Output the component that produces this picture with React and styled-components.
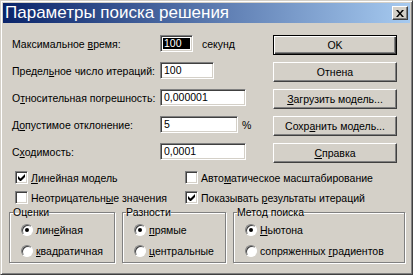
import React from 'react'
import styled, { createGlobalStyle } from 'styled-components'

const App = () => {
  return (
    <>
      <GlobalStyle />
      <Window>
        <TitleBar>
          <Title>Параметры поиска решения</Title>
          <CloseButton>
            <svg width="8" height="7" viewBox="0 0 8 7">
              <path d="M0 0h2l2 2.5L6 0h2L5 3.5 8 7H6L4 4.5 2 7H0l3-3.5z" fill="#000" />
            </svg>
          </CloseButton>
        </TitleBar>

        <Top>
          <Form>
            <Label>Максимальное <U>в</U>ремя:</Label>
            <Cell>
              <TextBox width={33}><Value selected>100</Value></TextBox>
              <Unit gap={9}>секунд</Unit>
            </Cell>

            <Label>Предел<U>ь</U>ное число итераций:</Label>
            <Cell>
              <TextBox width={54}><Value>100</Value></TextBox>
            </Cell>

            <Label>О<U>т</U>носительная погрешность:</Label>
            <Cell>
              <TextBox width={86}><Value>0,000001</Value></TextBox>
            </Cell>

            <Label>Д<U>о</U>пустимое отклонение:</Label>
            <Cell>
              <TextBox width={78}><Value>5</Value></TextBox>
              <Unit gap={4}>%</Unit>
            </Cell>

            <Label>С<U>х</U>одимость:</Label>
            <Cell>
              <TextBox width={86}><Value>0,0001</Value></TextBox>
            </Cell>
          </Form>

          <Buttons>
            <Button isDefault>OK</Button>
            <Button>Отнена</Button>
            <Button><U>З</U>агрузить модель...</Button>
            <Button>Сохр<U>а</U>нить модель...</Button>
            <Button><U>С</U>правка</Button>
          </Buttons>
        </Top>

        <Checks>
          <CheckRow>
            <CheckBox checked={true} />
            <span><U>Л</U>инейная модель</span>
          </CheckRow>
          <CheckRow>
            <CheckBox checked={false} />
            <span>Авто<U>м</U>атическое масштабирование</span>
          </CheckRow>
          <CheckRow>
            <CheckBox checked={false} />
            <span>Неотрицательн<U>ы</U>е значения</span>
          </CheckRow>
          <CheckRow>
            <CheckBox checked={true} />
            <span>Показывать <U>р</U>езультаты итераций</span>
          </CheckRow>
        </Checks>

        <Groups>
          <Group width={106}>
            <Legend>Оценки</Legend>
            <RadioRow><Radio checked /><span>лин<U>е</U>йная</span></RadioRow>
            <RadioRow><Radio /><span><U>к</U>вадратичная</span></RadioRow>
          </Group>
          <Group width={104}>
            <Legend>Разности</Legend>
            <RadioRow><Radio checked /><span><U>п</U>рямые</span></RadioRow>
            <RadioRow><Radio /><span><U>ц</U>ентральные</span></RadioRow>
          </Group>
          <Group width={172}>
            <Legend>Метод поиска</Legend>
            <RadioRow><Radio checked /><span><U>Н</U>ьютона</span></RadioRow>
            <RadioRow><Radio /><span>сопряженных <U>г</U>радиентов</span></RadioRow>
          </Group>
        </Groups>
      </Window>
    </>
  )
}

const CheckBox = ({ checked }) => (
  <Box>
    {checked && (
      <svg width="7" height="7" viewBox="0 0 7 7">
        <path d="M0 2v3l2 2h1l4-4V0L2.5 4.5z" fill="#000" />
      </svg>
    )}
  </Box>
)

const Radio = ({ checked }) => (
  <RadioCircle>{checked && <Dot />}</RadioCircle>
)

////////////////CSS////////////////

const GlobalStyle = createGlobalStyle`
  body {
    margin: 0;
    background: #d4d0c8;
    font-family: "Liberation Sans", Arial, sans-serif;
    font-size: 10.5px;
    color: #000;
  }
`

const Window = styled.div`
  width: 413px;
  height: 275px;
  box-sizing: border-box;
  background: #d4d0c8;
  border: 1px solid;
  border-color: #d4d0c8 #404040 #404040 #d4d0c8;
  box-shadow: inset 1px 1px #fff, inset -1px -1px #808080;
  padding: 2px;
  display: flex;
  flex-direction: column;
`

const TitleBar = styled.div`
  height: 20px;
  display: flex;
  align-items: center;
  justify-content: space-between;
  padding: 0 2px 0 2px;
  background: linear-gradient(to right, #0a246a, #a6caf0);
`

const Title = styled.div`
  color: #fff;
  font-size: 17px;
  line-height: 20px;
  white-space: nowrap;
`

const CloseButton = styled.div`
  width: 16px;
  height: 14px;
  box-sizing: border-box;
  background: #d4d0c8;
  border: 1px solid;
  border-color: #fff #404040 #404040 #fff;
  box-shadow: inset -1px -1px #808080;
  display: flex;
  align-items: center;
  justify-content: center;
`

const U = styled.span`
  text-decoration: underline;
`

//////////Top/////////////

const Top = styled.div`
  display: flex;
  margin-top: 12px;
`

const Form = styled.div`
  width: 261px;
  padding-left: 9px;
  display: grid;
  grid-template-columns: 148px 1fr;
  grid-auto-rows: 17px;
  row-gap: 10px;
  align-items: center;
`

const Label = styled.div`
  white-space: nowrap;
`

const Cell = styled.div`
  display: flex;
  align-items: center;
`

const TextBox = styled.div`
  width: ${p => p.width}px;
  height: 17px;
  box-sizing: border-box;
  background: #fff;
  border: 1px solid;
  border-color: #808080 #fff #fff #808080;
  box-shadow: inset 1px 1px #404040, inset -1px -1px #d4d0c8;
  padding: 2px;
  display: flex;
`

const Value = styled.span`
  flex: 1;
  line-height: 11px;
  padding-left: 1px;
  background: ${p => (p.selected ? '#000' : 'transparent')};
  color: ${p => (p.selected ? '#fff' : '#000')};
`

const Unit = styled.span`
  margin-left: ${p => p.gap}px;
`

const Buttons = styled.div`
  width: 124px;
  display: flex;
  flex-direction: column;
  gap: 7px;
`

const Button = styled.div`
  height: 20px;
  box-sizing: border-box;
  display: flex;
  align-items: center;
  justify-content: center;
  background: #d4d0c8;
  border: 1px solid;
  border-color: ${p => (p.isDefault ? '#000' : '#fff #404040 #404040 #fff')};
  box-shadow: ${p =>
    p.isDefault
      ? 'inset 1px 1px #fff, inset -1px -1px #404040, inset -2px -2px #808080'
      : 'inset -1px -1px #808080'};
`

//////////Checks/////////////

const Checks = styled.div`
  display: grid;
  grid-template-columns: 170px 1fr;
  grid-auto-rows: 13px;
  row-gap: 7px;
  margin-top: 8px;
  padding-left: 12px;
`

const CheckRow = styled.div`
  display: flex;
  align-items: center;
  gap: 3px;
  white-space: nowrap;
`

const Box = styled.div`
  width: 13px;
  height: 13px;
  box-sizing: border-box;
  background: #fff;
  border: 1px solid;
  border-color: #808080 #fff #fff #808080;
  box-shadow: inset 1px 1px #404040, inset -1px -1px #d4d0c8;
  display: flex;
  align-items: center;
  justify-content: center;
`

//////////Groups/////////////

const Groups = styled.div`
  display: flex;
  gap: 7px;
  margin-top: 2px;
  padding-left: 6px;
`

const Group = styled.fieldset`
  width: ${p => p.width}px;
  box-sizing: border-box;
  margin: 0;
  padding: 4px 2px 5px 2px;
  border: 1px solid #808080;
  box-shadow: 1px 1px #fff, inset 1px 1px #fff;
  display: flex;
  flex-direction: column;
  gap: 8px;
`

const Legend = styled.legend`
  padding: 0;
  margin-left: 1px;
  line-height: 13px;
`

const RadioRow = styled.div`
  display: flex;
  align-items: center;
  gap: 3px;
  height: 13px;
  margin-left: 9px;
  white-space: nowrap;
`

const RadioCircle = styled.div`
  width: 12px;
  height: 12px;
  box-sizing: border-box;
  border-radius: 50%;
  background: #fff;
  border: 1px solid;
  border-color: #808080 #fff #fff #808080;
  box-shadow: inset 1px 1px #404040;
  display: flex;
  align-items: center;
  justify-content: center;
`

const Dot = styled.div`
  width: 4px;
  height: 4px;
  border-radius: 50%;
  background: #000;
`

export default App
